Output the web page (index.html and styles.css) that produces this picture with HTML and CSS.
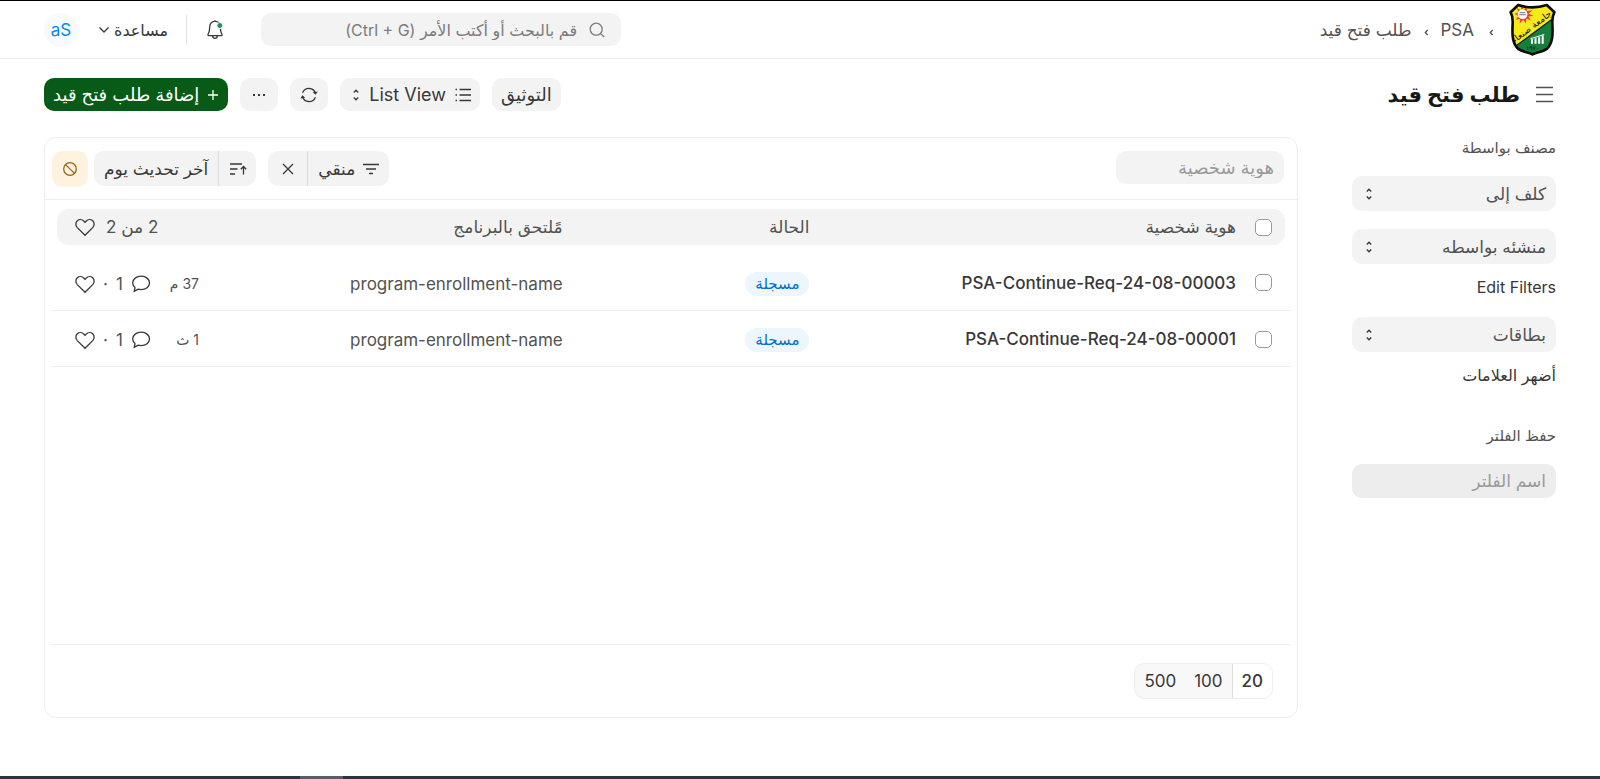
FILE: index.html
```html
<!DOCTYPE html>
<html lang="ar" dir="rtl">
<head>
<meta charset="utf-8">
<title>طلب فتح قيد</title>
<link rel="stylesheet" href="styles.css">
</head>
<body>
<svg class="sprite" aria-hidden="true">
  <symbol id="updown" viewBox="0 0 6 12"><path d="M.8 3.500 3 1.300l2.200 2.200M.8 8.500 3 10.700l2.200-2.200"/></symbol>
  <symbol id="heart" viewBox="0 0 20 20"><path d="M10 18.300 2.300 10.600C.4 8.600.4 5.600 2.300 3.800 4.200 2.100 7 2.300 8.700 4L10 5.400 11.300 4C13 2.300 15.800 2.100 17.700 3.800c1.900 1.800 1.900 4.800 0 6.800z"/></symbol>
  <symbol id="comment" viewBox="0 0 20 20"><path d="M10.200 2.200c4.700 0 8.300 2.900 8.300 6.700s-3.600 6.700-8.300 6.700c-1.100 0-2.100-.1-3-.4L3.300 17.200l.7-3.800C2.500 12.200 1.700 10.600 1.700 8.900c0-3.800 3.800-6.700 8.500-6.700z"/></symbol>
</svg>
<header class="navbar">
  <nav class="crumbs" aria-label="مسار التنقل">
    <a class="logo" href="#" aria-label="الرئيسية">
      <svg viewBox="0 0 46 52">
        <defs><clipPath id="shield"><path d="M9 2Q23 6.600 37 2L44.500 9Q42 13.500 42.500 21C43 31 43 39 37 45 32 48.500 27 48 23 50.500 19 48 14 48.500 9 45 3 39 3 31 3.500 21 4 13.500 1.500 9 1.500 9z"/></clipPath></defs>
        <g clip-path="url(#shield)">
          <path fill="#f7ea1c" d="M0 0h46v52H0z"/>
          <path fill="#15803c" d="M46 13 3 45v9h43z"/>
          <path stroke="#111" stroke-width="1.200" d="M46 13 3 45"/>
        </g>
        <path fill="#ee3b45" d="m12.500 3 1.500 3.500L17.500 4l-.2 4L23 7l-4 3.500 5 2-5 .7 2.500 4-4.500-2-.5 5-2.500-4-3.500 4 .2-4.500-4 .8L9 13 5.500 10.500 9.500 9 7.500 5l4 2z"/>
        <circle cx="13.200" cy="11" r="4.800" fill="#fff"/>
        <path stroke="#555" stroke-width=".8" d="M10.500 9.500h5.500M10 11.500h6.500"/>
        <path stroke="#fff" stroke-width="2" d="M22.500 35.500V40M26 34.500V40M29.500 33.500V40M33 32V40"/>
        <path stroke="#fff" stroke-width="1" d="m21 35 13.500-4"/>
        <text class="logo-name" x="23" y="26" transform="rotate(-37 23 25)">جامعة صنعاء</text>
        <text class="logo-year" x="23" y="46">١٩٧٠</text>
        <path fill="none" stroke="#0b0b0b" stroke-width="2.600" stroke-linejoin="round" d="M9 2Q23 6.600 37 2L44.500 9Q42 13.500 42.500 21C43 31 43 39 37 45 32 48.500 27 48 23 50.500 19 48 14 48.500 9 45 3 39 3 31 3.500 21 4 13.500 1.500 9 1.500 9z"/>
      </svg>
    </a>
    <svg class="sep" viewBox="0 0 5 7"><path d="M3.700 1 1.300 3.500l2.400 2.500"/></svg>
    <a href="#">PSA</a>
    <svg class="sep" viewBox="0 0 5 7"><path d="M3.700 1 1.300 3.500l2.400 2.500"/></svg>
    <a href="#">طلب فتح قيد</a>
  </nav>
  <div class="nav-tools">
    <label class="search">
      <svg class="i16" viewBox="0 0 16 16"><circle cx="7.200" cy="7.200" r="6"/><path d="m11.600 11.600 3.600 3.400"/></svg>
      <input type="text" aria-label="بحث" placeholder="قم بالبحث أو أكتب الأمر (Ctrl + G)">
    </label>
    <button class="bell" aria-label="الإشعارات">
      <svg viewBox="0 0 18 20"><path d="M9 1.300c-3.500 0-5.300 2.500-5.300 5.700 0 4.500-1 6-1.700 7.500-.2.700.1 1.200.8 1.200h12.400c.7 0 1-.5.8-1.200-.7-1.500-1.700-3-1.700-7.500 0-3.200-1.800-5.700-5.300-5.700zM9 1.300V.3M6.700 15.800c0 1.600 1 2.600 2.300 2.600s2.300-1 2.300-2.600"/><circle class="dot" cx="13.800" cy="5.500" r="3"/></svg>
    </button>
    <span class="rule"></span>
    <button class="help">مساعدة<svg viewBox="0 0 12 8"><path d="m1.500 1.500 4.500 4.500 4.500-4.500"/></svg></button>
    <button class="avatar">aS</button>
  </div>
</header>

<div class="page">
  <div class="page-head">
    <div class="title-area">
      <button class="menu" aria-label="القائمة"><svg viewBox="0 0 17 17"><path d="M0 1.500h17M0 8.500h17M0 15.500h17"/></svg></button>
      <h1>طلب فتح قيد</h1>
    </div>
    <div class="actions">
      <button class="btn">التوثيق</button>
      <button class="btn">
        <svg class="i16" viewBox="0 0 16 16"><path d="M4.500 2.500H16M4.500 8H16M4.500 13.500H16M.5 2.500H2M.5 8H2M.5 13.500H2"/></svg>
        <span>List View</span>
        <svg class="updown"><use href="#updown"/></svg>
      </button>
      <button class="btn icon-btn" aria-label="تحديث"><svg class="i18" viewBox="0 0 18 18"><path d="M2.600 6.800A6.800 6.800 0 0 1 15.500 7.500M15.400 11.200A6.800 6.800 0 0 1 2.500 10.500"/><path class="solid" d="M12.800 6.200 15.600 8.800 17.700 5.500zM5.200 11.800 2.400 9.200.3 12.500z"/></svg></button>
      <button class="btn icon-btn" aria-label="المزيد"><svg class="i14" viewBox="0 0 14 14"><path class="solid" d="M1 6h2v2H1zM6 6h2v2H6zM11 6h2v2h-2z"/></svg></button>
      <button class="btn primary"><svg class="i12" viewBox="0 0 12 12"><path d="M6 1v10M1 6h10"/></svg><span>إضافة طلب فتح قيد</span></button>
    </div>
  </div>

  <div class="content">
    <aside class="sidebar">
      <h2>مصنف بواسطة</h2>
      <button class="pick">كلف إلى<svg class="updown"><use href="#updown"/></svg></button>
      <button class="pick">منشئه بواسطه<svg class="updown"><use href="#updown"/></svg></button>
      <a href="#">Edit Filters</a>
      <button class="pick">بطاقات<svg class="updown"><use href="#updown"/></svg></button>
      <a href="#">أضهر العلامات</a>
      <h2 class="save"><label for="filter-name">حفظ الفلتر</label></h2>
      <input id="filter-name" class="filter-name" type="text" placeholder="اسم الفلتر">
    </aside>

    <main class="card">
      <div class="filters">
        <input class="id-filter" type="text" aria-label="هوية شخصية" placeholder="هوية شخصية">
        <div class="filter-tools">
          <div class="group">
            <button class="filter"><svg class="i16" viewBox="0 0 16 16"><path d="M0 3.500h16M3 8h10M6 12.500h4"/></svg>منقي</button>
            <button class="clear" aria-label="مسح"><svg class="i12" viewBox="0 0 12 12"><path d="m1 1 10 10M11 1 1 11"/></svg></button>
          </div>
          <div class="sort-area">
            <div class="group">
              <button class="order" aria-label="ترتيب"><svg class="i18" viewBox="0 0 18 16"><path d="M1 3h12M1 8h7.500M1 13h5M14.500 13.500V5.500M11.800 8.200l2.700-2.700 2.700 2.700"/></svg></button>
              <button class="sort">آخر تحديث يوم</button>
            </div>
            <button class="ban" aria-label="إيقاف"><svg class="i14" viewBox="0 0 14 14"><circle cx="7" cy="7" r="6.300"/><path d="m2.600 2.600 8.800 8.800"/></svg></button>
          </div>
        </div>
      </div>
      <div class="list">
        <table>
          <thead>
            <tr>
              <th class="c-check"><div><input type="checkbox" aria-label="تحديد الكل"></div></th>
              <th class="c-name"><div>هوية شخصية</div></th>
              <th class="c-status"><div>الحالة</div></th>
              <th><div>مًلتحق بالبرنامج</div></th>
              <th class="c-act"><div><span>2 من 2</span><svg class="i20"><use href="#heart"/></svg></div></th>
            </tr>
          </thead>
          <tbody>
            <tr>
              <td class="c-check"><input type="checkbox" aria-label="تحديد 00003"></td>
              <td class="name"><a href="#">PSA-Continue-Req-24-08-00003</a></td>
              <td><span class="pill">مسجلة</span></td>
              <td>program-enrollment-name</td>
              <td class="c-act"><div><span class="time">37 م</span><svg class="i20"><use href="#comment"/></svg><span class="count">1</span><span class="mid">·</span><svg class="i20"><use href="#heart"/></svg></div></td>
            </tr>
            <tr>
              <td class="c-check"><input type="checkbox" aria-label="تحديد 00001"></td>
              <td class="name"><a href="#">PSA-Continue-Req-24-08-00001</a></td>
              <td><span class="pill">مسجلة</span></td>
              <td>program-enrollment-name</td>
              <td class="c-act"><div><span class="time">1 ث</span><svg class="i20"><use href="#comment"/></svg><span class="count">1</span><span class="mid">·</span><svg class="i20"><use href="#heart"/></svg></div></td>
            </tr>
          </tbody>
        </table>
      </div>
      <div class="paging">
        <div class="pager">
          <button class="on">20</button><button>100</button><button>500</button>
        </div>
      </div>
    </main>
  </div>
</div>
<div class="taskbar"><span></span></div>
</body>
</html>
```

FILE: styles.css
```css
* { box-sizing: border-box; }

body {
  margin: 0;
  min-height: 100vh;
  display: flex;
  flex-direction: column;
  border-top: 1px solid #000;
  background: #fff;
  color: #383838;
  font: 17px/20px Inter, "DejaVu Sans", sans-serif;
}

button, input { font: inherit; color: inherit; }
button { border: 0; padding: 0; background: none; white-space: nowrap; }
a { color: inherit; text-decoration: none; }
h1, h2 { margin: 0; }

svg { display: block; flex: none; fill: none; stroke: currentColor; stroke-width: 1.3; }
svg .solid { fill: currentColor; stroke: none; }
.sprite { position: absolute; width: 0; height: 0; }
.i12 { width: 12px; height: 12px; }
.i14 { width: 14px; height: 14px; }
.i16 { width: 16px; height: 16px; }
.i18 { width: 18px; height: 18px; }
.i20 { width: 20px; height: 20px; }
.updown { width: 6px; height: 12px; stroke-width: 1.4; }

.navbar {
  display: flex;
  justify-content: space-between;
  align-items: center;
  height: 58px;
  padding: 0 44px;
  border-bottom: 1px solid #ededed;
}

.crumbs { display: flex; align-items: center; gap: 15px; color: #525252; }
.logo svg { width: 47px; height: 53px; stroke: none; }
.sep { width: 5px; height: 7px; margin-top: 6px; }
.crumbs a + .sep + a + .sep { margin-inline: -3px; }
.logo-name { font: 9px "DejaVu Sans", sans-serif; text-anchor: middle; fill: #111; stroke: none; }
.logo-year { font: 6px "DejaVu Sans", sans-serif; text-anchor: middle; fill: #111; stroke: none; }

.nav-tools { display: flex; align-items: center; font-size: 16px; }
.search {
  display: flex;
  align-items: center;
  gap: 12px;
  width: 360px;
  height: 33px;
  padding: 0 16px;
  border-radius: 10px;
  background: #f3f3f3;
  color: #7c7c7c;
}
.search input { flex: 1; min-width: 0; padding: 0; border: 0; background: none; }
::placeholder { color: #999; opacity: 1; }
.search ::placeholder { color: #7c7c7c; }
.bell { margin: 0 37px 0 19px; }
.bell svg { width: 18px; height: 20px; }
.bell .dot { fill: #278f5e; stroke: #fff; stroke-width: 1; }
.rule { width: 1px; height: 29px; background: #e2e2e2; }
.help { display: flex; align-items: center; gap: 4px; margin: 0 18px 0 20px; }
.help svg { width: 12px; height: 8px; }
.avatar { width: 34px; height: 34px; border-radius: 50%; background: #f7fbfd; color: #0289f7; font-size: 17px; }

.page { flex: 1; display: flex; flex-direction: column; padding: 19px 44px 58px; }
.page-head { display: flex; justify-content: space-between; align-items: center; height: 33px; }
.title-area { display: flex; align-items: center; gap: 16px; }
.menu { margin-inline-start: 3px; color: #525252; }
.menu svg { width: 17px; height: 17px; }
h1 { font-size: 21px; line-height: 32px; font-weight: 700; color: #171717; }

.actions { display: flex; gap: 12px; }
.btn {
  display: flex;
  align-items: center;
  gap: 9px;
  height: 33px;
  padding: 0 9px;
  border-radius: 10px;
  background: #f3f3f3;
  font-size: 18px;
}
.btn .updown { margin-inline: 1px 4px; }
.icon-btn { width: 38px; justify-content: center; }
.primary { gap: 8px; background: #075b16; color: #fff; }

.content { flex: 1; display: flex; gap: 54px; margin-top: 26px; }

.sidebar { width: 204px; display: flex; flex-direction: column; }
.sidebar h2 { font-size: 15px; line-height: 20px; font-weight: 400; color: #525252; margin: 1px 0 18px; }
.sidebar .save { margin-top: 21px; }
.sidebar a { margin: -5px 0 20px; line-height: 20px; font-size: 16px; }
.pick {
  display: flex;
  justify-content: space-between;
  align-items: center;
  height: 35px;
  margin-bottom: 18px;
  padding: 0 10px 0 14px;
  border-radius: 10px;
  background: #f3f3f3;
  color: #525252;
}
.pick svg { color: #383838; }
.filter-name { width: 100%; height: 34px; padding: 0 10px; border: 0; border-radius: 10px; background: #ededed; }

.card {
  flex: 1;
  min-width: 0;
  display: flex;
  flex-direction: column;
  border: 1px solid #ededed;
  border-radius: 12px;
}
.filters { display: flex; justify-content: space-between; padding: 13px 13px 12px 7px; border-bottom: 1px solid #ededed; }
.id-filter { width: 168px; height: 33px; padding: 0 10px; border: 0; border-radius: 10px; background: #f3f3f3; font-size: 18px; }
.filter-tools { display: flex; gap: 12px; }
.sort-area { display: flex; gap: 6px; }
.group { display: flex; height: 35px; border-radius: 10px; background: #f3f3f3; }
.group button { display: flex; align-items: center; justify-content: center; gap: 8px; padding: 0 10px; }
.group button + button { border-inline-start: 1px solid #dcdcdc; }
.group .clear { width: 40px; }
.group .order { width: 37px; }
.ban { display: grid; place-items: center; width: 36px; height: 36px; border-radius: 10px; background: #fff3df; color: #976417; }

.list { flex: 1; margin: 0 6px; padding-top: 9px; }
table { width: 100%; table-layout: fixed; border-collapse: collapse; }
th, td { padding: 0; text-align: start; font-weight: 400; color: #525252; white-space: nowrap; }
th { padding-bottom: 9px; }
th div { display: flex; align-items: center; height: 36px; background: #f3f3f3; }
th:first-child { padding-inline-start: 6px; }
th:first-child div { border-radius: 0 12px 12px 0; padding-inline-start: 13px; }
th:last-child { padding-inline-end: 6px; }
th:last-child div { border-radius: 12px 0 0 12px; padding-inline-end: 18px; }
td { height: 56px; padding-top: 4px; border-bottom: 1px solid #ededed; }
td.c-check, td.name { padding-top: 2px; }
.c-check { width: 55px; }
td.c-check { padding-inline-start: 19px; }
.c-name { width: 34.4%; }
.c-status { width: 19.9%; }
.c-act { width: 148px; }
.c-act div { display: flex; align-items: center; justify-content: flex-end; gap: 11px; }
td.c-act div { justify-content: flex-start; gap: 8px; padding-inline-end: 24px; }
.c-act svg { color: #383838; }
.time { flex: 1; font-size: 14px; }
.name a { color: #383838; font-weight: 500; }

input[type="checkbox"] {
  appearance: none;
  display: block;
  width: 17px;
  height: 17px;
  margin: 0;
  border: 1px solid #999;
  border-radius: 5px;
  background: #fff;
}
.pill { display: inline-block; height: 24px; padding: 0 10px; border-radius: 12px; background: #edf6fd; color: #0070cc; font-size: 15px; line-height: 24px; }

.paging { margin: 0 6px; padding: 18px; border-top: 1px solid #ededed; }
.pager {
  display: inline-flex;
  height: 36px;
  border: 1px solid #ededed;
  border-radius: 10px;
  background: #f8f8f8;
  overflow: hidden;
}
.pager button { padding: 0 9px; }
.pager .on { border-inline-end: 1px solid #dcdcdc; background: #fff; font-weight: 500; }

.taskbar { height: 3px; padding-left: 300px; background: #233746; direction: ltr; }
.taskbar span { display: block; width: 43px; height: 3px; background: #51606c; }
```
